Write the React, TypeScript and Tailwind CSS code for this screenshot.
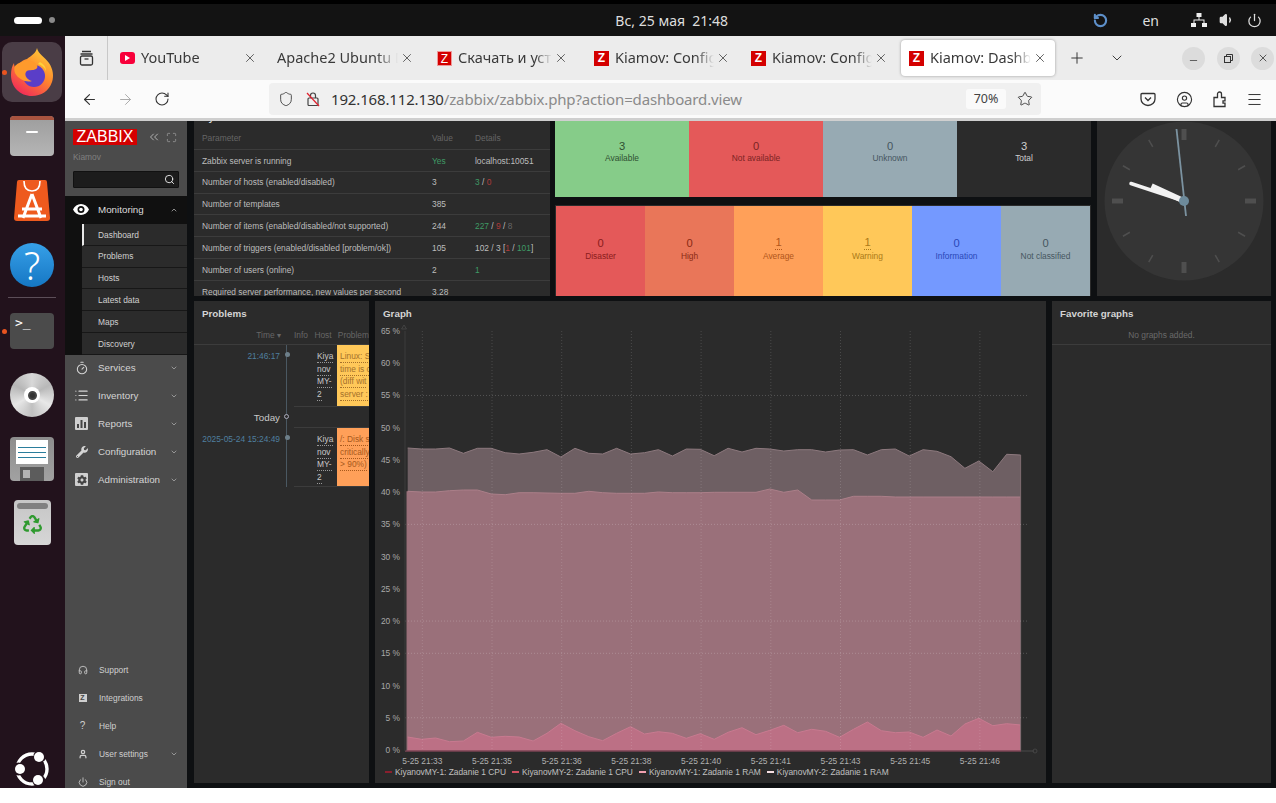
import React from "react";
import {
  ArrowLeft,
  ArrowRight,
  ChevronDown,
  ChevronUp,
  ChevronsLeft,
  CircleUser,
  Headphones,
  List,
  Maximize,
  Menu,
  Minus,
  Plus,
  Power,
  RotateCw,
  Search,
  Shield,
  Star,
  Timer,
  User,
  Volume1,
  X,
} from "lucide-react";
import { FaCog, FaRecycle, FaWrench } from "react-icons/fa";

const UI_FONT = "font-['Noto_Sans',sans-serif]";
const Z_FONT = "font-['Liberation_Sans',Arial,sans-serif]";

/* ---------- Ubuntu top bar ---------- */

function TopBar() {
  return (
    <div className={`h-[36px] shrink-0 bg-[#131313] border-t-4 border-black flex items-center text-[#dedede] ${UI_FONT}`}>
      <div className="w-[28px] h-[7px] ml-[14px] rounded-full bg-white" />
      <div className="w-[6px] h-[6px] ml-[7px] rounded-full bg-[#8a8a8a]" />
      <div className="flex-1 text-center text-[14px] pl-[195px]">Вс, 25 мая&nbsp;&nbsp;21:48</div>
      <RotateCw size={15} strokeWidth={3.4} className="text-[#5d8fc9] -scale-x-100 mr-[34px]" />
      <span className="text-[14px] mr-[32px]">en</span>
      <svg width="16" height="14" viewBox="0 0 16 14" className="mr-[12px]" fill="#eee">
        <rect x="5.5" y="0" width="5" height="4" />
        <rect x="0" y="10" width="5" height="4" />
        <rect x="11" y="10" width="5" height="4" />
        <path d="M7.5 4h1v2.5h5V10h-1V7.5h-9V10h-1V6.5h5z" />
      </svg>
      <Volume1 size={16} className="text-[#dedede] fill-[#dedede] mr-[12px]" />
      <Power size={15} className="text-[#dedede] mr-[14px]" />
    </div>
  );
}

/* ---------- Dock ---------- */

function FirefoxIcon() {
  return (
    <svg width="44" height="48" viewBox="0 0 44 48">
      <defs>
        <linearGradient id="ffOuter" x1="0.8" y1="0" x2="0.2" y2="1">
          <stop offset="0" stopColor="#ffd23a" />
          <stop offset="0.45" stopColor="#ff8a2c" />
          <stop offset="1" stopColor="#f0245c" />
        </linearGradient>
      </defs>
      <path
        d="M27 0c1 6 8 9 12 15 4 6 5 13 3 19-3 9-11 14-20 14C10 48 1 39 1 27c0-5 1-9 3-12 0 3 1 5 3 6 1-5 5-9 10-10 4-3 9-6 10-11z"
        fill="url(#ffOuter)"
      />
      <circle cx="24" cy="28" r="11" fill="#5a3ec8" />
      <path d="M5 18c5-5 14-7 20-3 3 2 3 5 1 6-3 2-8 0-10 3-2 3 1 8 6 9-6 2-14-2-17-8-1-3-1-5 0-7z" fill="#ff9a2c" />
      <path d="M30 14c4 2 6 5 6 9-2-4-4-6-8-7z" fill="#ffd23a" />
    </svg>
  );
}

function Dock() {
  return (
    <div className="w-[65px] shrink-0 bg-[#22121c] flex flex-col items-center relative pr-px">
      <div className="absolute left-[2px] top-[34px] w-[5px] h-[5px] rounded-full bg-[#e95420]" />
      <div className="absolute left-[2px] top-[293px] w-[5px] h-[5px] rounded-full bg-[#e95420]" />

      <div className="mt-[6px] w-[60px] h-[60px] rounded-[10px] bg-[#4a3d46] flex items-center justify-center">
        <FirefoxIcon />
      </div>

      {/* files */}
      <div className="mt-[14px] w-[44px] h-[40px] rounded-[4px] overflow-hidden bg-gradient-to-b from-[#9d9d9d] to-[#b5b5b5] flex flex-col items-center">
        <div className="h-[4px] w-full bg-[#a8533f]" />
        <div className="mt-[11px] w-[12px] h-[2px] bg-white rounded" />
      </div>

      {/* app center */}
      <svg width="36" height="42" viewBox="0 0 36 42" className="mt-[23px]">
        <path d="M3 3a2 2 0 012-2h26a2 2 0 012 2l3 36a3 3 0 01-3 3H3a3 3 0 01-3-3z" fill="#ee5a1e" />
        <path d="M10 2c0 8 4 10 8 10s8-2 8-10" fill="none" stroke="#fff" strokeWidth="1.6" />
        <path d="M18 15L9 39M18 15l9 24M8 30h20M4 37h28" fill="none" stroke="#fff" strokeWidth="3" />
      </svg>

      {/* help */}
      <div className={`mt-[22px] w-[44px] h-[44px] rounded-full bg-gradient-to-b from-[#36a0e8] to-[#1577c4] flex items-center justify-center text-white text-[38px] leading-none font-light ${UI_FONT}`}>
        ?
      </div>

      <div className="mt-[10px] w-[48px] h-px bg-[#5c4e58]" />

      {/* terminal */}
      <div className="mt-[15px] w-[44px] h-[36px] rounded-[4px] bg-[#4b4b4b] text-white text-[13px] leading-none px-[5px] pt-[3px] font-['DejaVu_Sans_Mono',monospace]">
        {">_"}
      </div>

      {/* cd */}
      <div className="mt-[24px] w-[44px] h-[44px] rounded-full bg-[conic-gradient(#d8d8d8,#b8b8b8,#e8e8e8,#c0c0c0,#e6e6e6,#b6b6b6,#d8d8d8)] flex items-center justify-center">
        <div className="w-[16px] h-[16px] rounded-full bg-white flex items-center justify-center">
          <div className="w-[9px] h-[9px] rounded-full bg-[#333] border-2 border-[#444]" />
        </div>
      </div>

      {/* floppy */}
      <div className="mt-[20px] w-[44px] h-[44px] rounded-[4px] bg-gradient-to-b from-[#8d8d8d] to-[#a2a2a2] flex flex-col items-center">
        <div className="mt-[3px] w-[32px] h-[24px] bg-white flex flex-col justify-center gap-[4px] px-[2px]">
          <div className="h-px bg-[#2a7d9c]" />
          <div className="h-px bg-[#2a7d9c]" />
          <div className="h-px bg-[#2a7d9c]" />
        </div>
        <div className="mt-[3px] w-[24px] flex-1 bg-[#5c5c5c] flex items-center pl-[3px]">
          <div className="w-[7px] h-[8px] bg-[#b4b4b4]" />
        </div>
      </div>

      {/* trash */}
      <div className="mt-[19px] w-[37px] h-[45px] rounded-[4px] bg-gradient-to-b from-[#c6c6c6] to-[#d6d6d6] flex flex-col items-center p-[3px]">
        <div className="h-[6px] w-full rounded-sm bg-[#808080]" />
        <FaRecycle size={19} className="text-[#2f9a2f] mt-[6px]" />
      </div>

      {/* ubuntu */}
      <svg width="38" height="38" viewBox="0 0 38 38" className="mt-auto">
        <circle cx="19" cy="19" r="15" fill="none" stroke="#fff" strokeWidth="3.4" />
        <circle cx="27" cy="6" r="6.5" fill="#22121c" />
        <circle cx="5.5" cy="19" r="6.5" fill="#22121c" />
        <circle cx="26" cy="31" r="6.5" fill="#22121c" />
        <circle cx="26" cy="7" r="5" fill="#fff" />
        <circle cx="7" cy="19" r="5" fill="#fff" />
        <circle cx="25" cy="30" r="5" fill="#fff" />
      </svg>
    </div>
  );
}

/* ---------- Firefox chrome ---------- */

function Favicon({ dim }: { dim?: boolean }) {
  return (
    <span className={`w-[15px] h-[15px] shrink-0 bg-[#d40000] text-white text-[12px] font-bold leading-[15px] text-center ${Z_FONT} ${dim ? "border border-[#fff]/60 font-normal leading-[12px]" : ""}`}>
      Z
    </span>
  );
}

function Tab({
  icon,
  title,
  width,
  active,
}: {
  icon?: React.ReactNode;
  title: string;
  width: string;
  active?: boolean;
}) {
  return (
    <div
      className={`${width} h-[36px] shrink-0 flex items-center pl-[8px] pr-[8px] rounded-[4px] ${
        active ? "bg-white shadow-[0_0_3px_rgba(0,0,0,0.35)]" : ""
      }`}
    >
      {icon}
      <span className={`flex-1 min-w-0 text-[14.5px] text-[#3a3a3a] whitespace-nowrap overflow-hidden [mask-image:linear-gradient(to_right,black_82%,transparent)] ${icon ? "ml-[6px]" : "ml-[4px]"}`}>
        {title}
      </span>
      <X size={14} strokeWidth={1.4} className="text-[#444] shrink-0 ml-[2px]" />
    </div>
  );
}

function WindowButton({ children }: { children: React.ReactNode }) {
  return (
    <div className="w-[23px] h-[23px] rounded-full bg-[#dcdcdc] flex items-center justify-center text-[#333]">
      {children}
    </div>
  );
}

function BrowserChrome() {
  return (
    <div className={`shrink-0 ${UI_FONT}`}>
      <div className="h-[44px] bg-[#ececec] flex items-center">
        <div className="w-[43px] h-full border-r border-[#c8c8c8] flex items-center justify-center shrink-0">
          <svg width="15" height="16" viewBox="0 0 15 16" fill="none" stroke="#333" strokeWidth="1.3">
            <path d="M3 1.5h9M1.5 4h12" />
            <rect x="1.5" y="6" width="12" height="9" rx="1.5" />
            <path d="M5.5 9h4" />
          </svg>
        </div>
        <div className="ml-[3px] flex items-center">
          <Tab
            width="w-[154px]"
            title="YouTube"
            icon={
              <span className="w-[15px] h-[12px] ml-[1px] rounded-[3px] bg-[#f8003a] flex items-center justify-center shrink-0">
                <span className="border-l-[5px] border-l-white border-y-[3px] border-y-transparent" />
              </span>
            }
          />
          <Tab width="w-[157px]" title="Apache2 Ubuntu D" />
          <div className="w-[7px]" />
          <Tab width="w-[147px]" title="Скачать и устан" icon={<Favicon dim />} />
          <div className="w-[10px]" />
          <Tab width="w-[152px]" title="Kiamov: Config" icon={<Favicon />} />
          <div className="w-[5px]" />
          <Tab width="w-[153px]" title="Kiamov: Config" icon={<Favicon />} />
          <div className="w-[5px]" />
          <Tab width="w-[154px]" title="Kiamov: Dashbo" icon={<Favicon />} active />
        </div>
        <Plus size={18} strokeWidth={1.3} className="text-[#333] ml-[13px]" />
        <ChevronDown size={16} strokeWidth={1.4} className="text-[#333] ml-[23px]" />
        <div className="ml-auto mr-[2px] flex items-center gap-[11.5px]">
          <WindowButton>
            <Minus size={11} strokeWidth={1.6} className="mt-[4px]" />
          </WindowButton>
          <WindowButton>
            <svg width="9" height="9" viewBox="0 0 9 9" fill="none" stroke="#333">
              <rect x="0.5" y="2.5" width="6" height="6" />
              <path d="M2.5 2.5v-2h6v6h-2" />
            </svg>
          </WindowButton>
          <WindowButton>
            <X size={12} strokeWidth={1.6} />
          </WindowButton>
        </div>
      </div>
      <div className="h-[38px] bg-[#fbfbfb] flex items-center">
        <ArrowLeft size={17} strokeWidth={1.6} className="ml-[16px] text-[#333]" />
        <ArrowRight size={17} strokeWidth={1.4} className="ml-[19px] text-[#aaa]" />
        <RotateCw size={16} strokeWidth={1.6} className="ml-[20px] text-[#333]" />
        <div className="ml-[99px] w-[772px] h-[32px] rounded-[4px] bg-[#f0f0f0] flex items-center relative">
          <Shield size={16} strokeWidth={1.4} className="ml-[9px] text-[#444]" />
          <svg width="14" height="16" viewBox="0 0 14 16" className="ml-[12px]" fill="none" stroke="#444" strokeWidth="1.2">
            <rect x="2" y="7" width="10" height="7.5" rx="1" />
            <path d="M4.5 7V4.5a2.5 2.5 0 015 0V7" />
            <path d="M1 2l12 13" stroke="#e0222f" />
          </svg>
          <span className="ml-[11px] text-[15px] tracking-[-0.15px] text-[#8a8a8a] whitespace-nowrap">
            <span className="text-[#333]">192.168.112.130</span>/zabbix/zabbix.php?action=dashboard.view
          </span>
          <span className="ml-auto w-[40px] h-[20px] rounded-[3px] bg-[#fafafa] flex items-center justify-center text-[12.5px] text-[#444]">
            70%
          </span>
          <Star size={16} strokeWidth={1.3} className="mx-[8px] ml-[11px] text-[#333]" />
        </div>
        <svg width="16" height="16" viewBox="0 0 16 16" className="ml-[99px]" fill="none" stroke="#333" strokeWidth="1.3">
          <path d="M2 2.5h12a1 1 0 011 1V8a7 6.5 0 01-14 0V3.500a1 1 0 011-1z" />
          <path d="M5 6.500l3 3 3-3" />
        </svg>
        <CircleUser size={17} strokeWidth={1.6} className="ml-[20px] text-[#333]" />
        <svg width="16" height="17" viewBox="0 0 16 17" className="ml-[18px]" fill="none" stroke="#333" strokeWidth="1.3">
          <path d="M3 15.500V6.500h3.500V3a2 2 0 014 0v3.500H14v3.300h-2v2.400h2v3.300z" />
        </svg>
        <Menu size={17} strokeWidth={1.4} className="ml-[19px] text-[#333]" />
      </div>
      <div className="h-[3px] bg-[#cfcfcf]" />
    </div>
  );
}

/* ---------- Zabbix sidebar ---------- */

const subItems = ["Dashboard", "Problems", "Hosts", "Latest data", "Maps", "Discovery"];

function SquareIcon({ children }: { children: React.ReactNode }) {
  return <span className="w-[13px] h-[13px] rounded-[1px] bg-[#cfcfcf] flex items-center justify-center text-[#444]">{children}</span>;
}

const mainItems: { label: string; icon: React.ReactNode }[] = [
  { label: "Services", icon: <Timer size={14} strokeWidth={1.8} /> },
  { label: "Inventory", icon: <List size={15} strokeWidth={1.8} /> },
  {
    label: "Reports",
    icon: (
      <SquareIcon>
        <svg width="9" height="8" viewBox="0 0 9 8" fill="#444">
          <rect x="0" y="4" width="2" height="4" />
          <rect x="3.500" y="0" width="2" height="8" />
          <rect x="7" y="2" width="2" height="6" />
        </svg>
      </SquareIcon>
    ),
  },
  { label: "Configuration", icon: <FaWrench size={12} /> },
  {
    label: "Administration",
    icon: (
      <SquareIcon>
        <FaCog size={10} />
      </SquareIcon>
    ),
  },
];

const bottomItems: { label: string; icon: React.ReactNode; arrow?: boolean }[] = [
  { label: "Support", icon: <Headphones size={10} strokeWidth={2} /> },
  {
    label: "Integrations",
    icon: <span className="w-[8px] h-[8px] bg-[#cfcfcf] text-[#444] text-[7px] font-bold leading-[8px] text-center">Z</span>,
  },
  { label: "Help", icon: <span className="text-[10px] leading-none">?</span> },
  { label: "User settings", icon: <User size={10} strokeWidth={3} />, arrow: true },
  { label: "Sign out", icon: <Power size={10} strokeWidth={2} /> },
];

function Sidebar() {
  return (
    <div className={`w-[122px] shrink-0 bg-[#4b4b4b] flex flex-col overflow-hidden ${Z_FONT}`}>
      <div className="h-[75px] shrink-0 pl-[8px] pr-[8px] pt-[8px]">
        <div className="flex items-center">
          <div className="w-[64px] h-[16px] bg-[#d40000] text-white text-[16px] leading-[16px] text-center">ZABBIX</div>
          <ChevronsLeft size={14} strokeWidth={1.2} className="ml-[10px] text-[#ddd]" />
          <Maximize size={11} strokeWidth={1.2} className="ml-[5px] text-[#bbb]" />
        </div>
        <div className="mt-[6px] text-[8.400px] leading-[12px] text-[#808080]">Kiamov</div>
        <div className="mt-[8px] w-[106px] h-[17px] rounded-[1px] bg-[#1c1c1c] border border-[#111] flex items-center justify-end pr-[3px]">
          <Search size={11} strokeWidth={1.8} className="text-white" />
        </div>
      </div>

      <div className="h-[27px] shrink-0 bg-[#101010] flex items-center pl-[8px] text-[#dcdcdc]">
        <svg width="16" height="11" viewBox="0 0 16 11" fill="#fff">
          <path fillRule="evenodd" d="M8 0c3.500 0 6.500 2.200 8 5.500C14.500 8.800 11.500 11 8 11S1.500 8.800 0 5.500C1.500 2.200 4.500 0 8 0zm0 2a3.500 3.500 0 100 7 3.500 3.500 0 000-7z" />
          <circle cx="8" cy="5.500" r="1.800" />
        </svg>
        <span className="ml-[9px] pt-[2px] text-[9.800px]">Monitoring</span>
        <ChevronUp size={8} strokeWidth={2} className="ml-auto mr-[9px] text-[#ccc]" />
      </div>
      <div className="shrink-0 bg-[#101010] pl-[17px] pt-px">
        {subItems.map((item, i) => (
          <div
            key={item}
            className={`h-[21.830px] pt-px bg-[#2b2b2b] border-b border-[#171717] flex items-center text-[8.400px] text-[#d0d0d0] ${
              i === 0 ? "border-l-2 border-l-[#e8e8e8] pl-[14px]" : "pl-[16px]"
            }`}
          >
            {item}
          </div>
        ))}
      </div>

      <div className="-mt-px shrink-0">
        {mainItems.map((m) => (
          <div key={m.label} className="h-[28px] flex items-center text-[#d4d4d4]">
            <span className="w-[33px] flex justify-center">{m.icon}</span>
            <span className="text-[9.800px]">{m.label}</span>
            <ChevronDown size={8} strokeWidth={2} className="ml-auto mr-[9px] text-[#bbb]" />
          </div>
        ))}
      </div>

      <div className="mt-auto mb-[-8px] shrink-0">
        {bottomItems.map((m) => (
          <div key={m.label} className="h-[28px] flex items-center text-[#cfcfcf]">
            <span className="w-[34px] pl-[1px] flex justify-center">{m.icon}</span>
            <span className="text-[8.400px]">{m.label}</span>
            {m.arrow && <ChevronDown size={8} strokeWidth={2} className="ml-auto mr-[9px] text-[#bbb]" />}
          </div>
        ))}
      </div>
    </div>
  );
}

/* ---------- Widgets ---------- */

const G = "text-[#3f9a65]";
const R = "text-[#b03a3a]";

const sysRows: { p: string; v: React.ReactNode; d?: React.ReactNode }[] = [
  { p: "Zabbix server is running", v: <span className={G}>Yes</span>, d: "localhost:10051" },
  {
    p: "Number of hosts (enabled/disabled)",
    v: "3",
    d: (
      <>
        <span className={G}>3</span> / <span className={R}>0</span>
      </>
    ),
  },
  { p: "Number of templates", v: "385" },
  {
    p: "Number of items (enabled/disabled/not supported)",
    v: "244",
    d: (
      <>
        <span className={G}>227</span> / <span className={R}>9</span> / <span className="text-[#666]">8</span>
      </>
    ),
  },
  {
    p: "Number of triggers (enabled/disabled [problem/ok])",
    v: "105",
    d: (
      <>
        102 / 3 [<span className={R}>1</span> / <span className={G}>101</span>]
      </>
    ),
  },
  { p: "Number of users (online)", v: "2", d: <span className={G}>1</span> },
  { p: "Required server performance, new values per second", v: "3.28" },
];

function SystemInfo() {
  return (
    <div className="w-[356px] shrink-0 bg-[#2b2b2b] overflow-hidden text-[8.400px] text-[#bdbdbd]">
      <div className="-mt-[10px] h-[15px] pl-[8px] font-bold text-[9.800px] leading-[13px] text-[#d0d0d0]">System information</div>
      <div className="flex h-[24px] pt-[2px] items-center px-[8px] text-[#666] border-b border-[#3c3c3c]">
        <span className="w-[230px]">Parameter</span>
        <span className="w-[43px]">Value</span>
        <span>Details</span>
      </div>
      {sysRows.map((r) => (
        <div key={r.p} className="flex h-[21.830px] pt-px items-center px-[8px] border-b border-[#3c3c3c] whitespace-nowrap">
          <span className="w-[230px]">{r.p}</span>
          <span className="w-[43px]">{r.v}</span>
          <span>{r.d}</span>
        </div>
      ))}
    </div>
  );
}

function StatCell({ n, label, bg, fg, link }: { n: number; label: string; bg: string; fg: string; link?: boolean }) {
  return (
    <div className={`flex-1 flex flex-col items-center justify-center pb-[4px] ${bg} ${fg}`}>
      <span className={`text-[11.200px] leading-[13px] ${link ? "border-b border-dotted border-current" : ""}`}>{n}</span>
      <span className="text-[8.400px] leading-[12px]">{label}</span>
    </div>
  );
}

function HostCell({ n, label, bg, fg }: { n: number; label: string; bg: string; fg: string }) {
  return (
    <div className={`flex-1 flex flex-col items-center pt-[19px] ${bg} ${fg}`}>
      <span className="text-[11.200px] leading-[13px]">{n}</span>
      <span className="text-[8.400px] leading-[11px]">{label}</span>
    </div>
  );
}

function StatusColumn() {
  return (
    <div className="w-[536px] shrink-0 flex flex-col">
      <div className="h-[76px] flex">
        <HostCell n={3} label="Available" bg="bg-[#86cc89]" fg="text-[#2e4f31]" />
        <HostCell n={0} label="Not available" bg="bg-[#e45959]" fg="text-[#7a2424]" />
        <HostCell n={0} label="Unknown" bg="bg-[#97aab3]" fg="text-[#46565f]" />
        <HostCell n={3} label="Total" bg="bg-[#2b2b2b]" fg="text-[#cfcfcf]" />
      </div>
      <div className="mt-[8px] h-[91px] flex border border-[#2b2b2b] border-b-0">
        <StatCell n={0} label="Disaster" bg="bg-[#e45959]" fg="text-[#8a1c1c]" />
        <StatCell n={0} label="High" bg="bg-[#e97659]" fg="text-[#8a2a14]" />
        <StatCell n={1} label="Average" bg="bg-[#ffa059]" fg="text-[#b0551a]" link />
        <StatCell n={1} label="Warning" bg="bg-[#ffc859]" fg="text-[#ab7a18]" link />
        <StatCell n={0} label="Information" bg="bg-[#7499ff]" fg="text-[#2a48b8]" />
        <StatCell n={0} label="Not classified" bg="bg-[#97aab3]" fg="text-[#46565f]" />
      </div>
    </div>
  );
}

function ClockWidget() {
  const ticks = Array.from({ length: 12 }, (_, i) => i * 30);
  return (
    <div className="w-[174px] shrink-0 bg-[#2b2b2b] flex justify-center items-start">
      <svg width="160" height="160" viewBox="0 0 160 160">
        <circle cx="80" cy="80" r="79.500" fill="#353535" />
        {ticks.map((a) => (
          <rect
            key={a}
            x={a % 90 === 0 ? 77.500 : 79.250}
            y={a % 90 === 0 ? 8 : 9.500}
            width={a % 90 === 0 ? 5 : 1.500}
            height={a % 90 === 0 ? 11 : 8}
            fill="#4f4f4f"
            transform={`rotate(${a} 80 80)`}
          />
        ))}
        <path d="M80 80L47.500 65" stroke="#f2f2f2" strokeWidth="5.500" strokeLinecap="butt" />
        <path d="M80 80L27 62.500" stroke="#f2f2f2" strokeWidth="3.500" strokeLinecap="round" />
        <path d="M72.500 8L82 95" stroke="#7c93a1" strokeWidth="1.800" />
        <circle cx="80" cy="80" r="5" fill="#6d8a9b" />
      </svg>
    </div>
  );
}

function HostLink({ lines }: { lines: string[] }) {
  return (
    <div className="w-[20px] shrink-0 text-[#c8c8c8]">
      {lines.map((l) => (
        <div key={l} className="h-[12.600px]">
          <span className="border-b border-dotted border-[#999] leading-[11px] inline-block">{l}</span>
        </div>
      ))}
    </div>
  );
}

function TimelineCell({ dot, hollow }: { dot?: boolean; hollow?: boolean }) {
  return (
    <div className="w-[14px] shrink-0 flex justify-center relative">
      <div className="w-px h-full bg-[#4a5862] mr-[1px]" />
      {dot && <span className="absolute top-[7px] left-[4.500px] w-[5px] h-[5px] rounded-full bg-[#6d7f8a]" />}
      {hollow && <span className="absolute top-[7px] left-[4px] w-[5px] h-[5px] rounded-full border border-[#aab] bg-[#2b2b2b]" />}
    </div>
  );
}

function ProblemText({ lines, color }: { lines: string[]; color: string }) {
  return (
    <div className={`flex-1 min-w-0 overflow-hidden pt-[5px] pl-[3px] whitespace-nowrap ${color}`}>
      {lines.map((l) => (
        <div key={l} className="h-[12.600px]">
          <span className="border-b border-dotted border-current leading-[11px] inline-block">{l}</span>
        </div>
      ))}
    </div>
  );
}

function ProblemsWidget() {
  return (
    <div className="w-[175px] shrink-0 bg-[#2b2b2b] overflow-hidden text-[8.400px] text-[#bdbdbd]">
      <div className="h-[26px] pl-[8px] flex items-center text-[9.800px] font-bold text-[#d4d4d4]">Problems</div>
      <div className="h-[18px] flex items-center text-[#666] border-b border-[#3c3c3c] whitespace-nowrap">
        <span className="w-[89px] text-right">Time ▾</span>
        <span className="ml-[13px] w-[21px]">Info</span>
        <span className="w-[24px]">Host</span>
        <span>Problem</span>
      </div>
      <div className="flex h-[62px]">
        <div className="w-[86px] shrink-0 pt-[5px] text-right text-[#4f7f9f]">21:46:17</div>
        <TimelineCell dot />
        <div className="flex-1 min-w-0 flex border-b border-[#3c3c3c]">
          <div className="w-[23px] shrink-0" />
          <div className="pt-[5px]">
            <HostLink lines={["Kiya", "nov", "MY-", "2"]} />
          </div>
          <div className="flex-1 min-w-0 bg-[#ffc859] flex">
            <ProblemText lines={["Linux: S", "time is c", "(diff wit", "server :"]} color="text-[#a5702a]" />
          </div>
        </div>
      </div>
      <div className="flex h-[21px]">
        <div className="w-[86px] shrink-0 pt-[5px] text-right text-[9.800px] leading-[12px] text-[#c8c8c8]">Today</div>
        <TimelineCell hollow />
        <div className="flex-1 border-b border-[#3c3c3c]" />
      </div>
      <div className="flex h-[59px]">
        <div className="w-[86px] shrink-0 pt-[5px] text-right text-[#4f7f9f] whitespace-nowrap">2025-05-24 15:24:49</div>
        <TimelineCell dot />
        <div className="flex-1 min-w-0 flex border-b border-[#3c3c3c]">
          <div className="w-[23px] shrink-0" />
          <div className="pt-[5px]">
            <HostLink lines={["Kiya", "nov", "MY-", "2"]} />
          </div>
          <div className="flex-1 min-w-0 bg-[#ffa059] flex">
            <ProblemText lines={["/: Disk s", "critically", "> 90%)"]} color="text-[#a8591c]" />
          </div>
        </div>
      </div>
    </div>
  );
}

/* ---------- Graph ---------- */

const upperY = [
  448, 449, 449, 448, 453.3, 448.3, 448.3, 452.7, 454, 452.3, 449.7, 457, 448.3, 453.3, 454, 448.3, 454, 452.7, 449.7, 456, 449, 449.3,
  455.7, 448.3, 452, 448.3, 449, 451, 449.7, 449.7, 452, 450, 449.7, 455, 449.7, 449, 456, 449.7, 451.3, 456.7, 468.3, 461, 471.7, 454.3, 455,
];
const middleY = [
  491.3, 492, 492, 490.7, 490, 490, 494, 494.7, 492.7, 492.7, 493, 493.3, 493.3, 491.3, 492.7, 493.3, 493.3, 493.3, 492, 492.7, 492.7, 492.7,
  492.3, 492.3, 492.3, 492.3, 489, 492.3, 490, 500, 500, 500, 496.3, 496.3, 496.3, 497, 497, 497, 497, 497, 497, 497, 497, 497, 497,
];
const lowerRaw = [
  141, 148, 144, 155, 153, 127, 142, 139, 141, 153, 130, 100, 122, 140, 152, 130, 110, 132, 125, 130, 145, 131, 148, 127, 113, 134, 121, 106,
  128, 118, 124, 142, 118, 96, 122, 128, 126, 142, 120, 138, 102, 85, 107, 101, 105,
];

const xAt = (i: number) => 407.700 + i * 13.93;
const linePts = (ys: number[]) => ys.map((y, i) => `${xAt(i).toFixed(1)},${y.toFixed(1)}`).join(" ");
const areaPts = (ys: number[]) => `407.7,751 ${linePts(ys)} ${xAt(44).toFixed(1)},751`;

const yLabels = [65, 60, 55, 50, 45, 40, 35, 30, 25, 20, 15, 10, 5, 0];
const gridLines = [55, 35, 20, 15, 5];
const timeLabels = ["21:33", "21:35", "21:36", "21:38", "21:40", "21:41", "21:43", "21:45", "21:46"];

function GraphChart() {
  const lowerY = lowerRaw.map((v) => 690 + v / 3);
  return (
    <svg width="671" height="441" viewBox="375 325 671 441" className="block font-['Liberation_Sans',Arial,sans-serif]">
      <polygon points={areaPts(upperY)} fill="#6e5f63" />
      <polygon points={`406.5,751 406.5,${middleY[0]} ${linePts(middleY)} ${xAt(44).toFixed(1)},751`} fill="#9a707a" />
      <polygon points={areaPts(lowerY)} fill="#bc7085" />
      <polyline points={linePts(upperY)} fill="none" stroke="#8d797e" strokeWidth="1" />
      <polyline points={linePts(middleY)} fill="none" stroke="#ab7f89" strokeWidth="1" />
      <polyline points={linePts(lowerY)} fill="none" stroke="#c87a90" strokeWidth="1" />
      <line x1={xAt(44)} x2={xAt(44)} y1="455" y2="751" stroke="#7f6c71" />

      {yLabels.map((v, i) => {
        const y = 331 + i * 32.23;
        return (
          <g key={v}>
            {gridLines.includes(v) && <line x1="405" x2="1029" y1={y} y2={y} stroke="#fff" strokeOpacity="0.2" strokeDasharray="1 2" />}
            <text x="400" y={y + 3} textAnchor="end" fontSize="8.400" fill="#a8a8a8">
              {v} %
            </text>
          </g>
        );
      })}
      {timeLabels.map((t, i) => {
        const x = 422.300 + i * 69.700;
        return (
          <g key={t}>
            <line x1={x} x2={x} y1="331" y2="751" stroke="#fff" strokeOpacity="0.15" strokeDasharray="1 2" />
            <text x={x} y="764" textAnchor="middle" fontSize="8.400" fill="#b0b0b0">
              5-25 {t}
            </text>
          </g>
        );
      })}
      <line x1="405" x2="1021" y1="751" y2="751" stroke="#7d4555" strokeWidth="1.500" />
      <line x1="1021" x2="1034" y1="751" y2="751" stroke="#4a4a4a" />
      <line x1="405" x2="405" y1="331" y2="751" stroke="#3c3c3c" />
      <path d="M404 325l2.500 4h-5z" fill="none" stroke="#4a4a4a" strokeWidth="0.800" />
      <circle cx="1035" cy="751" r="2" fill="none" stroke="#4a4a4a" strokeWidth="0.800" />
    </svg>
  );
}

const legend = [
  { name: "KiyanovMY-1: Zadanie 1 CPU", color: "bg-[#8a1f2e]" },
  { name: "KiyanovMY-2: Zadanie 1 CPU", color: "bg-[#d05060]" },
  { name: "KiyanovMY-1: Zadanie 1 RAM", color: "bg-[#f0a0b0]" },
  { name: "KiyanovMY-2: Zadanie 1 RAM", color: "bg-[#f5dfe3]" },
];

function GraphWidget() {
  return (
    <div className="w-[671px] shrink-0 bg-[#2b2b2b] overflow-hidden">
      <div className="h-[24px] pl-[8px] pt-[2px] flex items-center text-[9.800px] font-bold text-[#d4d4d4]">Graph</div>
      <GraphChart />
      <div className="pl-[10px] flex items-center gap-[6px] h-[13px] text-[8.400px] text-[#c0c0c0]">
        {legend.map((l) => (
          <div key={l.name} className="flex items-center gap-[3px] whitespace-nowrap">
            <span className={`w-[7px] h-[2px] ${l.color}`} />
            <span>{l.name}</span>
          </div>
        ))}
      </div>
    </div>
  );
}

function FavoriteWidget() {
  return (
    <div className="w-[219px] shrink-0 bg-[#2b2b2b]">
      <div className="h-[26px] pl-[8px] flex items-center text-[9.800px] font-bold text-[#d4d4d4]">Favorite graphs</div>
      <div className="h-[18px] border-b border-[#3c3c3c] flex items-center justify-center text-[8.400px] text-[#6a6a6a]">No graphs added.</div>
    </div>
  );
}

function Dashboard() {
  return (
    <div className={`flex-1 min-w-0 bg-[#0e1012] pl-[7px] overflow-hidden ${Z_FONT}`}>
      <div className="h-[175px] flex">
        <SystemInfo />
        <div className="w-[5px]" />
        <StatusColumn />
        <div className="w-[6px]" />
        <ClockWidget />
      </div>
      <div className="mt-[5px] h-[482px] flex gap-[6px]">
        <ProblemsWidget />
        <GraphWidget />
        <FavoriteWidget />
      </div>
    </div>
  );
}

export default function App() {
  return (
    <div className="w-[1276px] h-[803px] bg-white overflow-hidden">
      <TopBar />
      <div className="h-[752px] flex">
        <Dock />
        <div className="flex-1 min-w-0 flex flex-col">
          <BrowserChrome />
          <div className="flex-1 min-h-0 flex">
            <Sidebar />
            <Dashboard />
          </div>
        </div>
      </div>
    </div>
  );
}
